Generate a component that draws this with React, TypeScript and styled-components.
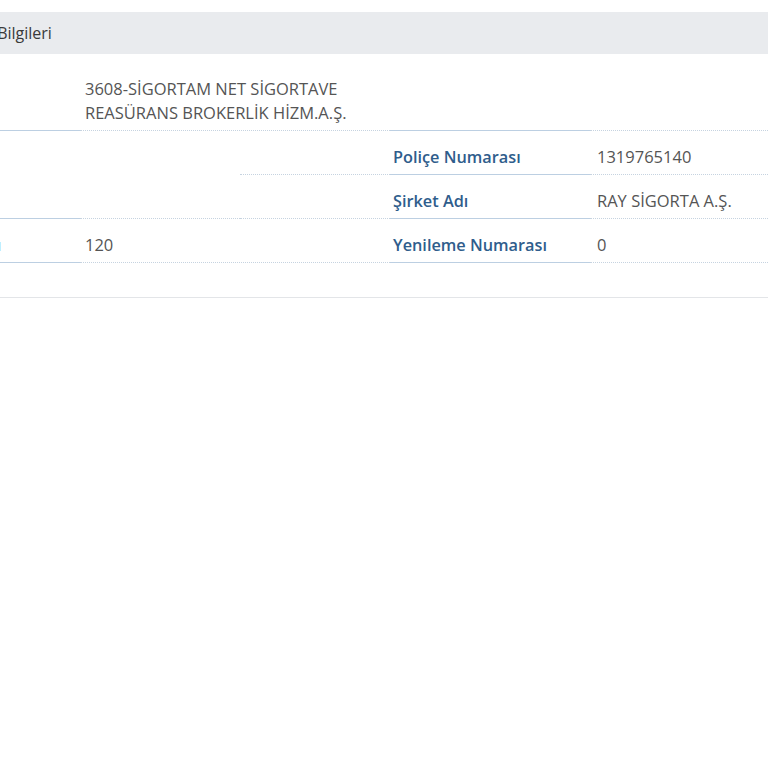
import React from "react";
import styled, { createGlobalStyle } from "styled-components";

const GlobalStyle = createGlobalStyle`
  html, body {
    margin: 0;
    padding: 0;
    background: #ffffff;
  }
  body {
    font-family: "Open Sans", "Noto Sans", sans-serif;
    overflow: hidden;
  }
`;

const Page = styled.div`
  width: 768px;
  height: 768px;
  overflow: hidden;
  padding-top: 12px;
  box-sizing: border-box;
`;

/* the panel continues past both window edges, only its middle is on screen */
const Panel = styled.section`
  margin-left: -126px;
  width: 1030px;
  border-bottom: 1px solid #e3e5e8;
`;

const PanelHeader = styled.h3`
  margin: 0;
  padding: 9px 0 9px 75px;
  background: #e9ebee;
  font-size: 16px;
  font-weight: 400;
  line-height: 24px;
  color: #3a3a3a;
`;

const PanelBody = styled.div`
  padding: 9px 0 34px;
`;

const FormGrid = styled.div`
  display: grid;
  grid-template-columns: 206px 160px 150px 200px 1fr;
  grid-template-rows: auto 44px 44px 44px;
`;

const Cell = styled.div<{ $col: string; $row: string }>`
  grid-column: ${(p) => p.$col};
  grid-row: ${(p) => p.$row};
  box-sizing: border-box;
  line-height: 24px;
`;

const Label = styled(Cell)`
  padding: 14px 3px 5px;
  border-bottom: 1px solid #bccfe2;
  color: #2f5d8c;
  font-size: 16.3px;
  font-weight: 600;
  white-space: nowrap;
`;

const Value = styled(Cell)<{ $inset?: number }>`
  padding: 14px 7px 5px ${(p) => p.$inset ?? 5}px;
  border-bottom: 1px dotted #c6d3e0;
  color: #555555;
  font-size: 16.5px;
`;

const App: React.FC = () => {
  return (
    <>
      <GlobalStyle />
      <Page>
        <Panel>
          <PanelHeader>Poliçe Bilgileri</PanelHeader>
          <PanelBody>
            <FormGrid>
              <Label $col="1" $row="1" />
              <Value $col="2 / 4" $row="1">
                3608-SİGORTAM NET SİGORTAVE REASÜRANS BROKERLİK HİZM.A.Ş.
              </Value>
              <Label $col="4" $row="1" />
              <Value $col="5" $row="1" />

              <Label $col="1" $row="2 / 4" />
              <Value $col="2" $row="2 / 4" />
              <Value $col="3" $row="2" />
              <Value $col="3" $row="3" />
              <Label $col="4" $row="2">Poliçe Numarası</Label>
              <Value $col="5" $row="2" $inset={7}>1319765140</Value>
              <Label $col="4" $row="3">Şirket Adı</Label>
              <Value $col="5" $row="3" $inset={7}>RAY SİGORTA A.Ş.</Value>

              <Label $col="1" $row="4">Vade Gün Sayısı</Label>
              <Value $col="2 / 4" $row="4">120</Value>
              <Label $col="4" $row="4">Yenileme Numarası</Label>
              <Value $col="5" $row="4" $inset={7}>0</Value>
            </FormGrid>
          </PanelBody>
        </Panel>
      </Page>
    </>
  );
};

export default App;
